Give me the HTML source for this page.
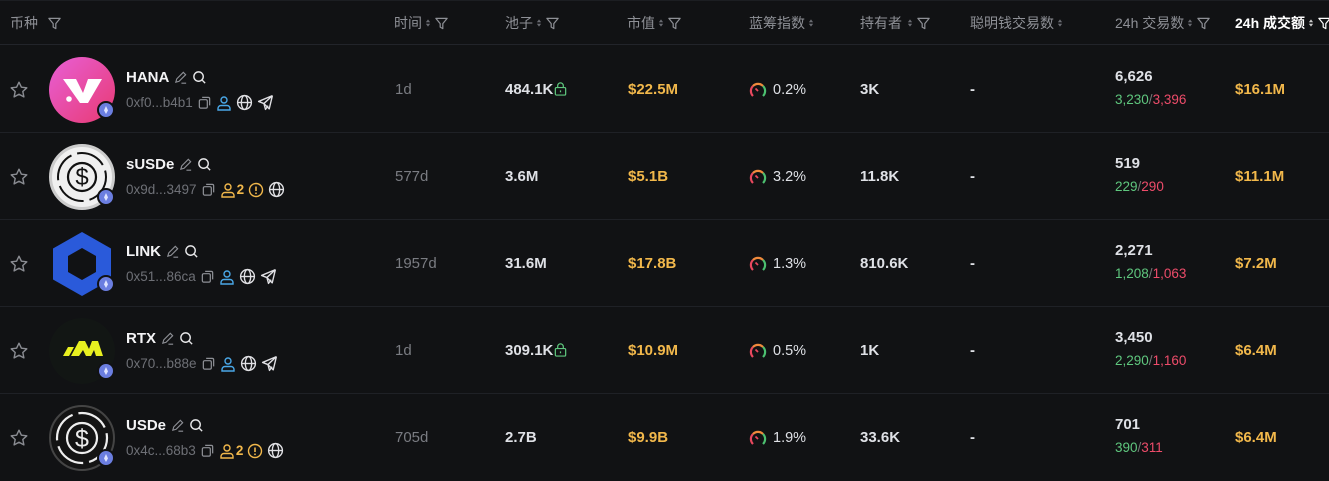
<!DOCTYPE html>
<html><head><meta charset="utf-8"><style>
*{margin:0;padding:0;box-sizing:border-box}
body{width:1329px;height:480px;background:#111214;overflow:hidden;font-family:"Liberation Sans","Noto Sans CJK SC",sans-serif;color:#e8e8ea;position:relative}
.a{position:absolute;white-space:nowrap}
.hd{position:absolute;left:0;top:0;width:1329px;height:45px;border-bottom:1px solid #22242a;border-top:1px solid #1c1e22}
.h{position:absolute;top:12px;font-size:14px;color:#8e9096;display:flex;align-items:center;gap:3px;white-space:nowrap}
.row{position:absolute;left:0;width:1329px;height:87px;border-bottom:1px solid #1f2126}
.nm{font-size:15px;font-weight:bold;color:#f4f4f6;display:flex;align-items:center;gap:4px}
.ad{font-size:13.5px;color:#6e7076;display:flex;align-items:center;gap:4px}
.tm{font-family:"Liberation Sans",sans-serif;font-size:15px;color:#7a7c82}
.v{font-size:15px;font-weight:bold;color:#dfe1e6}
.g{font-size:15px;font-weight:bold;color:#f2b84b}
.eth{position:absolute;width:18px;height:18px;border-radius:50%;background:#6b7ee0;border:2px solid #111214;left:97px;top:55px}
.eth:after{content:"";position:absolute;left:5px;top:3px;width:4px;height:8px;background:#dfe4ff;clip-path:polygon(50% 0,100% 55%,50% 100%,0 55%)}
.logo{position:absolute;left:49px;top:11px;width:66px;height:66px;border-radius:50%}
</style></head><body>
<svg width="0" height="0" style="position:absolute">
<defs>
<symbol id="fil" viewBox="0 0 16 16"><path d="M2 2.5h12l-4.6 5.6v5.4l-2.8-1.6V8.1z" fill="none" stroke="currentColor" stroke-width="1.3" stroke-linejoin="round"/></symbol>
<symbol id="srt" viewBox="0 0 8 14"><path d="M4 2l3 4H1z M4 12l3-4H1z" fill="currentColor"/></symbol>
<symbol id="star" viewBox="0 0 20 20"><path d="M10 2.2l2.4 5 5.4.6-4 3.7 1.1 5.4L10 14.2 5.1 16.9l1.1-5.4-4-3.7 5.4-.6z" fill="none" stroke="#8a8c92" stroke-width="1.4" stroke-linejoin="round"/></symbol>
<symbol id="pen" viewBox="0 0 16 16"><path d="M3 13l1-3.5 7-7 2.5 2.5-7 7zM9 14h5" fill="none" stroke="#8e9096" stroke-width="1.2"/></symbol>
<symbol id="srch" viewBox="0 0 16 16"><circle cx="7" cy="7" r="5" fill="none" stroke="#e8e8ea" stroke-width="1.5"/><path d="M11 11l3 3" stroke="#e8e8ea" stroke-width="1.5"/></symbol>
<symbol id="cp" viewBox="0 0 16 16"><rect x="2.5" y="5" width="8.5" height="9" rx="1.5" fill="none" stroke="#8e9096" stroke-width="1.3"/><path d="M5.5 2.5h6.5a1.5 1.5 0 0 1 1.5 1.5v7" fill="none" stroke="#8e9096" stroke-width="1.3"/></symbol>
<symbol id="usr" viewBox="0 0 16 16"><circle cx="8" cy="5" r="3" fill="none" stroke="currentColor" stroke-width="1.4"/><path d="M2 15v-1.5a3 3 0 0 1 3-3h6a3 3 0 0 1 3 3V15z" fill="none" stroke="currentColor" stroke-width="1.4"/></symbol>
<symbol id="glb" viewBox="0 0 16 16"><g fill="none" stroke="#e0e0e4" stroke-width="1.3"><circle cx="8" cy="8" r="6.5"/><ellipse cx="8" cy="8" rx="3" ry="6.5"/><path d="M1.5 8h13"/></g></symbol>
<symbol id="tg" viewBox="0 0 16 16"><path d="M14.5 1.5L1.5 7l5 2 1.5 5.5 2.5-3.5M14.5 1.5L6.5 9M14.5 1.5l-3 12.5-5-5" fill="none" stroke="#e0e0e4" stroke-width="1.3" stroke-linejoin="round"/></symbol>
<symbol id="wrn" viewBox="0 0 16 16"><circle cx="8" cy="8" r="6.5" fill="none" stroke="#f2b84b" stroke-width="1.4"/><path d="M8 4.5v4.5" stroke="#f2b84b" stroke-width="1.6"/><circle cx="8" cy="11.3" r=".9" fill="#f2b84b"/></symbol>
<symbol id="lk" viewBox="0 0 16 16"><rect x="2.5" y="7" width="11" height="8" rx="1.2" fill="none" stroke="#5fc77e" stroke-width="1.3"/><path d="M5 7V5a3 3 0 0 1 6 0v2" fill="none" stroke="#5fc77e" stroke-width="1.3"/><path d="M8 10v2" stroke="#5fc77e" stroke-width="1.3"/></symbol>
<symbol id="gg" viewBox="0 0 20 20"><path d="M5 15a7 7 0 0 1 0-10" fill="none" stroke="#e8485e" stroke-width="2.2"/><path d="M5 5a7 7 0 0 1 10 0" fill="none" stroke="#f08a3c" stroke-width="2.2"/><path d="M15 5a7 7 0 0 1 0 10" fill="none" stroke="#4cc070" stroke-width="2.2"/><path d="M10 10l-2.5-2.5" stroke="#e8485e" stroke-width="1.8"/></symbol>
</defs></svg>

<div class="hd">
<div class="h" style="left:10px">币种 <svg width="15" height="15" style="margin-left:6px;color:#8e9096"><use href="#fil"/></svg></div>
<div class="h" style="left:394px">时间<svg width="6" height="10" style="color:#6a6c72"><use href="#srt"/></svg><svg width="15" height="15"><use href="#fil"/></svg></div>
<div class="h" style="left:505px">池子<svg width="6" height="10" style="color:#6a6c72"><use href="#srt"/></svg><svg width="15" height="15"><use href="#fil"/></svg></div>
<div class="h" style="left:627px">市值<svg width="6" height="10" style="color:#6a6c72"><use href="#srt"/></svg><svg width="15" height="15"><use href="#fil"/></svg></div>
<div class="h" style="left:749px">蓝筹指数<svg width="6" height="10" style="color:#6a6c72"><use href="#srt"/></svg></div>
<div class="h" style="left:860px">持有者<svg width="6" height="10" style="color:#6a6c72;margin-left:2px"><use href="#srt"/></svg><svg width="15" height="15"><use href="#fil"/></svg></div>
<div class="h" style="left:970px">聪明钱交易数<svg width="6" height="10" style="color:#6a6c72"><use href="#srt"/></svg></div>
<div class="h" style="left:1115px">24h 交易数<svg width="6" height="10" style="color:#6a6c72"><use href="#srt"/></svg><svg width="15" height="15"><use href="#fil"/></svg></div>
<div class="h" style="left:1235px;color:#fff;font-weight:bold">24h 成交额<svg width="6" height="10" style="color:#ccc"><use href="#srt"/></svg><svg width="15" height="15"><use href="#fil"/></svg></div>
</div>

<!-- row 1 -->
<div class="row" style="top:46px">
<svg class="a" style="left:9px;top:34px" width="20" height="20"><use href="#star"/></svg>
<div class="logo" style="background:linear-gradient(135deg,#e85fd6,#e83a72)"><svg width="66" height="66"><path d="M14 22h13l7 14 5-14h14l-14 24h-8z" fill="#fff"/><circle cx="20" cy="42" r="2.8" fill="#fff"/></svg></div><div class="eth"></div>
<div class="a nm" style="left:126px;top:23px">HANA <svg width="15" height="15"><use href="#pen"/></svg><svg width="15" height="15"><use href="#srch"/></svg></div>
<div class="a ad" style="left:126px;top:48px">0xf0...b4b1 <svg width="15" height="15"><use href="#cp"/></svg><svg width="16" height="16" style="color:#4aa8e8"><use href="#usr"/></svg><svg width="17" height="17"><use href="#glb"/></svg><svg width="17" height="17"><use href="#tg"/></svg></div>
<div class="a tm" style="left:395px;top:35px">1d</div>
<div class="a v" style="left:505px;top:35px">484.1K<svg width="15" height="15" style="vertical-align:-2px"><use href="#lk"/></svg></div>
<div class="a g" style="left:628px;top:35px">$22.5M</div>
<svg class="a" style="left:748px;top:35px" width="20" height="20"><use href="#gg"/></svg><div class="a v" style="left:773px;top:36px;font-weight:normal;font-size:14.5px">0.2%</div>
<div class="a v" style="left:860px;top:35px">3K</div>
<div class="a v" style="left:970px;top:35px">-</div>
<div class="a v" style="left:1115px;top:22px">6,626</div>
<div class="a" style="left:1115px;top:46px;font-size:13.5px"><span style="color:#5fc77e">3,230</span><span style="color:#777">/</span><span style="color:#ee4c6a">3,396</span></div>
<div class="a g" style="left:1235px;top:35px">$16.1M</div>
</div>

<!-- row 2 -->
<div class="row" style="top:133px">
<svg class="a" style="left:9px;top:34px" width="20" height="20"><use href="#star"/></svg>
<div class="logo" style="background:#f0f0f0;border:3px solid #ccc"><svg width="60" height="60"><circle cx="30" cy="30" r="24" fill="none" stroke="#111" stroke-width="2" stroke-dasharray="30 6"/><circle cx="30" cy="30" r="14" fill="none" stroke="#111" stroke-width="2.2"/><text x="30" y="38" text-anchor="middle" font-size="24" font-family="Liberation Sans" fill="#111">$</text></svg></div><div class="eth"></div>
<div class="a nm" style="left:126px;top:23px">sUSDe <svg width="15" height="15"><use href="#pen"/></svg><svg width="15" height="15"><use href="#srch"/></svg></div>
<div class="a ad" style="left:126px;top:48px">0x9d...3497 <svg width="15" height="15"><use href="#cp"/></svg><svg width="16" height="16" style="color:#f2b84b"><use href="#usr"/></svg><b style="color:#f2b84b;margin-left:-3px">2</b><svg width="16" height="16"><use href="#wrn"/></svg><svg width="17" height="17"><use href="#glb"/></svg></div>
<div class="a tm" style="left:395px;top:35px">577d</div>
<div class="a v" style="left:505px;top:35px">3.6M</div>
<div class="a g" style="left:628px;top:35px">$5.1B</div>
<svg class="a" style="left:748px;top:35px" width="20" height="20"><use href="#gg"/></svg><div class="a v" style="left:773px;top:36px;font-weight:normal;font-size:14.5px">3.2%</div>
<div class="a v" style="left:860px;top:35px">11.8K</div>
<div class="a v" style="left:970px;top:35px">-</div>
<div class="a v" style="left:1115px;top:22px">519</div>
<div class="a" style="left:1115px;top:46px;font-size:13.5px"><span style="color:#5fc77e">229</span><span style="color:#777">/</span><span style="color:#ee4c6a">290</span></div>
<div class="a g" style="left:1235px;top:35px">$11.1M</div>
</div>

<!-- row 3 -->
<div class="row" style="top:220px">
<svg class="a" style="left:9px;top:34px" width="20" height="20"><use href="#star"/></svg>
<svg class="a" style="left:49px;top:9px" width="66" height="70"><path d="M33 3l29 16.5v31L33 67 4 50.5v-31z" fill="#2a5ada"/><path d="M33 19l14 8v16l-14 8-14-8V27z" fill="#111214"/></svg><div class="eth"></div>
<div class="a nm" style="left:126px;top:23px">LINK <svg width="15" height="15"><use href="#pen"/></svg><svg width="15" height="15"><use href="#srch"/></svg></div>
<div class="a ad" style="left:126px;top:48px">0x51...86ca <svg width="15" height="15"><use href="#cp"/></svg><svg width="16" height="16" style="color:#4aa8e8"><use href="#usr"/></svg><svg width="17" height="17"><use href="#glb"/></svg><svg width="17" height="17"><use href="#tg"/></svg></div>
<div class="a tm" style="left:395px;top:35px">1957d</div>
<div class="a v" style="left:505px;top:35px">31.6M</div>
<div class="a g" style="left:628px;top:35px">$17.8B</div>
<svg class="a" style="left:748px;top:35px" width="20" height="20"><use href="#gg"/></svg><div class="a v" style="left:773px;top:36px;font-weight:normal;font-size:14.5px">1.3%</div>
<div class="a v" style="left:860px;top:35px">810.6K</div>
<div class="a v" style="left:970px;top:35px">-</div>
<div class="a v" style="left:1115px;top:22px">2,271</div>
<div class="a" style="left:1115px;top:46px;font-size:13.5px"><span style="color:#5fc77e">1,208</span><span style="color:#777">/</span><span style="color:#ee4c6a">1,063</span></div>
<div class="a g" style="left:1235px;top:35px">$7.2M</div>
</div>

<!-- row 4 -->
<div class="row" style="top:307px">
<svg class="a" style="left:9px;top:34px" width="20" height="20"><use href="#star"/></svg>
<div class="logo" style="background:#121614"><svg width="66" height="66"><path d="M14 38l5-9h6l-5 9z M22 38l8-15h6l4 8 3-8h6l5 15h-7l-2-6-3 6h-5l-3-6-4 6z" fill="#e8f020"/></svg></div><div class="eth"></div>
<div class="a nm" style="left:126px;top:23px">RTX <svg width="15" height="15"><use href="#pen"/></svg><svg width="15" height="15"><use href="#srch"/></svg></div>
<div class="a ad" style="left:126px;top:48px">0x70...b88e <svg width="15" height="15"><use href="#cp"/></svg><svg width="16" height="16" style="color:#4aa8e8"><use href="#usr"/></svg><svg width="17" height="17"><use href="#glb"/></svg><svg width="17" height="17"><use href="#tg"/></svg></div>
<div class="a tm" style="left:395px;top:35px">1d</div>
<div class="a v" style="left:505px;top:35px">309.1K<svg width="15" height="15" style="vertical-align:-2px"><use href="#lk"/></svg></div>
<div class="a g" style="left:628px;top:35px">$10.9M</div>
<svg class="a" style="left:748px;top:35px" width="20" height="20"><use href="#gg"/></svg><div class="a v" style="left:773px;top:36px;font-weight:normal;font-size:14.5px">0.5%</div>
<div class="a v" style="left:860px;top:35px">1K</div>
<div class="a v" style="left:970px;top:35px">-</div>
<div class="a v" style="left:1115px;top:22px">3,450</div>
<div class="a" style="left:1115px;top:46px;font-size:13.5px"><span style="color:#5fc77e">2,290</span><span style="color:#777">/</span><span style="color:#ee4c6a">1,160</span></div>
<div class="a g" style="left:1235px;top:35px">$6.4M</div>
</div>

<!-- row 5 -->
<div class="row" style="top:394px;border-bottom:none">
<svg class="a" style="left:9px;top:34px" width="20" height="20"><use href="#star"/></svg>
<div class="logo" style="background:#141414;border:2px solid #444"><svg width="62" height="62"><circle cx="31" cy="31" r="25" fill="none" stroke="#eee" stroke-width="2.2" stroke-dasharray="32 6"/><circle cx="31" cy="31" r="15" fill="none" stroke="#eee" stroke-width="2.2"/><text x="31" y="40" text-anchor="middle" font-size="25" font-family="Liberation Sans" fill="#eee">$</text></svg></div><div class="eth"></div>
<div class="a nm" style="left:126px;top:23px">USDe <svg width="15" height="15"><use href="#pen"/></svg><svg width="15" height="15"><use href="#srch"/></svg></div>
<div class="a ad" style="left:126px;top:48px">0x4c...68b3 <svg width="15" height="15"><use href="#cp"/></svg><svg width="16" height="16" style="color:#f2b84b"><use href="#usr"/></svg><b style="color:#f2b84b;margin-left:-3px">2</b><svg width="16" height="16"><use href="#wrn"/></svg><svg width="17" height="17"><use href="#glb"/></svg></div>
<div class="a tm" style="left:395px;top:35px">705d</div>
<div class="a v" style="left:505px;top:35px">2.7B</div>
<div class="a g" style="left:628px;top:35px">$9.9B</div>
<svg class="a" style="left:748px;top:35px" width="20" height="20"><use href="#gg"/></svg><div class="a v" style="left:773px;top:36px;font-weight:normal;font-size:14.5px">1.9%</div>
<div class="a v" style="left:860px;top:35px">33.6K</div>
<div class="a v" style="left:970px;top:35px">-</div>
<div class="a v" style="left:1115px;top:22px">701</div>
<div class="a" style="left:1115px;top:46px;font-size:13.5px"><span style="color:#5fc77e">390</span><span style="color:#777">/</span><span style="color:#ee4c6a">311</span></div>
<div class="a g" style="left:1235px;top:35px">$6.4M</div>
</div>
</body></html>
